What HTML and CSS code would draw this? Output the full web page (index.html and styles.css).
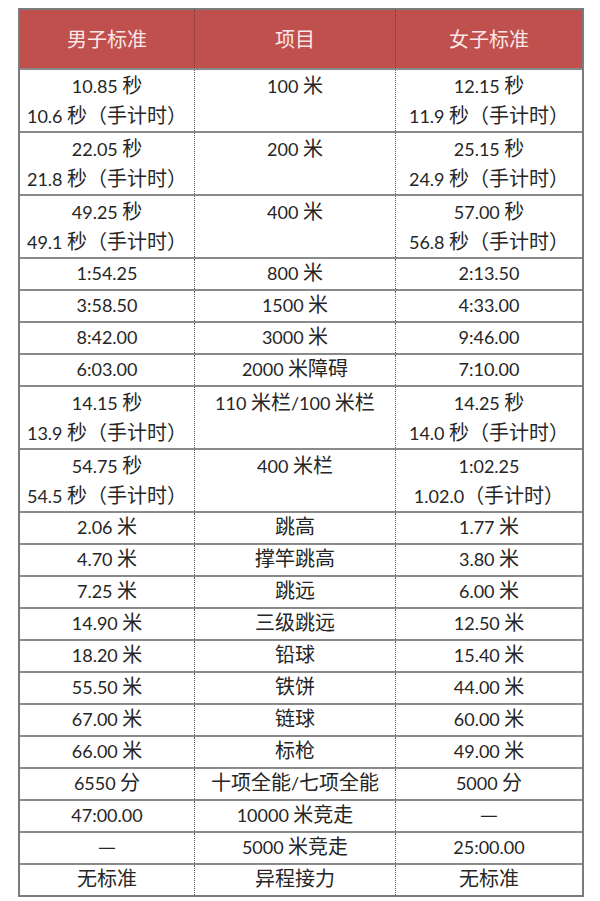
FILE: index.html
```html
<!DOCTYPE html>
<html lang="zh">
<head>
<meta charset="utf-8">
<title>标准</title>
<link rel="stylesheet" href="styles.css">
</head>
<body>
<div class="tbl">
  <div class="row head"><div class="cell">男子标准</div><div class="cell">项目</div><div class="cell">女子标准</div></div>
  <div class="row dbl"><div class="cell"><span class="n">10.85</span> 秒<br><span class="n">10.6</span> 秒（手计时）</div><div class="cell"><span class="n">100</span> 米</div><div class="cell"><span class="n">12.15</span> 秒<br><span class="n">11.9</span> 秒（手计时）</div></div>
  <div class="row dbl"><div class="cell"><span class="n">22.05</span> 秒<br><span class="n">21.8</span> 秒（手计时）</div><div class="cell"><span class="n">200</span> 米</div><div class="cell"><span class="n">25.15</span> 秒<br><span class="n">24.9</span> 秒（手计时）</div></div>
  <div class="row dbl"><div class="cell"><span class="n">49.25</span> 秒<br><span class="n">49.1</span> 秒（手计时）</div><div class="cell"><span class="n">400</span> 米</div><div class="cell"><span class="n">57.00</span> 秒<br><span class="n">56.8</span> 秒（手计时）</div></div>
  <div class="row sgl"><div class="cell"><span class="n">1:54.25</span></div><div class="cell"><span class="n">800</span> 米</div><div class="cell"><span class="n">2:13.50</span></div></div>
  <div class="row sgl"><div class="cell"><span class="n">3:58.50</span></div><div class="cell"><span class="n">1500</span> 米</div><div class="cell"><span class="n">4:33.00</span></div></div>
  <div class="row sgl"><div class="cell"><span class="n">8:42.00</span></div><div class="cell"><span class="n">3000</span> 米</div><div class="cell"><span class="n">9:46.00</span></div></div>
  <div class="row sgl"><div class="cell"><span class="n">6:03.00</span></div><div class="cell"><span class="n">2000</span> 米障碍</div><div class="cell"><span class="n">7:10.00</span></div></div>
  <div class="row dbl"><div class="cell"><span class="n">14.15</span> 秒<br><span class="n">13.9</span> 秒（手计时）</div><div class="cell"><span class="n">110</span> 米栏<span class="n">/100</span> 米栏</div><div class="cell"><span class="n">14.25</span> 秒<br><span class="n">14.0</span> 秒（手计时）</div></div>
  <div class="row dbl"><div class="cell"><span class="n">54.75</span> 秒<br><span class="n">54.5</span> 秒（手计时）</div><div class="cell"><span class="n">400</span> 米栏</div><div class="cell"><span class="n">1:02.25</span><br><span class="n">1.02.0</span>（手计时）</div></div>
  <div class="row sgl"><div class="cell"><span class="n">2.06</span> 米</div><div class="cell">跳高</div><div class="cell"><span class="n">1.77</span> 米</div></div>
  <div class="row sgl"><div class="cell"><span class="n">4.70</span> 米</div><div class="cell">撑竿跳高</div><div class="cell"><span class="n">3.80</span> 米</div></div>
  <div class="row sgl"><div class="cell"><span class="n">7.25</span> 米</div><div class="cell">跳远</div><div class="cell"><span class="n">6.00</span> 米</div></div>
  <div class="row sgl"><div class="cell"><span class="n">14.90</span> 米</div><div class="cell">三级跳远</div><div class="cell"><span class="n">12.50</span> 米</div></div>
  <div class="row sgl"><div class="cell"><span class="n">18.20</span> 米</div><div class="cell">铅球</div><div class="cell"><span class="n">15.40</span> 米</div></div>
  <div class="row sgl"><div class="cell"><span class="n">55.50</span> 米</div><div class="cell">铁饼</div><div class="cell"><span class="n">44.00</span> 米</div></div>
  <div class="row sgl"><div class="cell"><span class="n">67.00</span> 米</div><div class="cell">链球</div><div class="cell"><span class="n">60.00</span> 米</div></div>
  <div class="row sgl"><div class="cell"><span class="n">66.00</span> 米</div><div class="cell">标枪</div><div class="cell"><span class="n">49.00</span> 米</div></div>
  <div class="row sgl"><div class="cell"><span class="n">6550</span> 分</div><div class="cell">十项全能<span class="n">/</span>七项全能</div><div class="cell"><span class="n">5000</span> 分</div></div>
  <div class="row sgl"><div class="cell"><span class="n">47:00.00</span></div><div class="cell"><span class="n">10000</span> 米竞走</div><div class="cell">—</div></div>
  <div class="row sgl"><div class="cell">—</div><div class="cell"><span class="n">5000</span> 米竞走</div><div class="cell"><span class="n">25:00.00</span></div></div>
  <div class="row sgl"><div class="cell">无标准</div><div class="cell">异程接力</div><div class="cell">无标准</div></div>
</div>
</body>
</html>
```

FILE: styles.css
```css
html, body {
  margin: 0;
  padding: 0;
  background: #ffffff;
}

body {
  font-family: "Noto Sans CJK SC", "Noto Sans", sans-serif;
  color: #262626;
}

.tbl {
  margin: 8px 0 0 18px;
  width: 566px;
  box-sizing: border-box;
  border: 2px solid #7b7b7b;
}

.row {
  display: grid;
  grid-template-columns: 174px 201px 187px;
  box-sizing: border-box;
  border-top: 2px solid #8a8a8a;
}

.cell {
  text-align: center;
  font-size: 20px;
  line-height: 30px;
  white-space: nowrap;
}

.cell + .cell {
  border-left: 1px dotted #555555;
}

.n {
  font-family: "Lato", "Liberation Sans", sans-serif;
  font-size: 18px;
  line-height: 1;
}

.head {
  border-top: none;
  height: 58px;
  background: #c0504d;
}

.head .cell {
  line-height: 58px;
  color: #fbe7e6;
}

.head .cell + .cell {
  border-left-color: #7a3a38;
}

.dbl {
  height: 63px;
}

.sgl {
  height: 32px;
}

.sgl .cell {
  line-height: 26px;
}
```
